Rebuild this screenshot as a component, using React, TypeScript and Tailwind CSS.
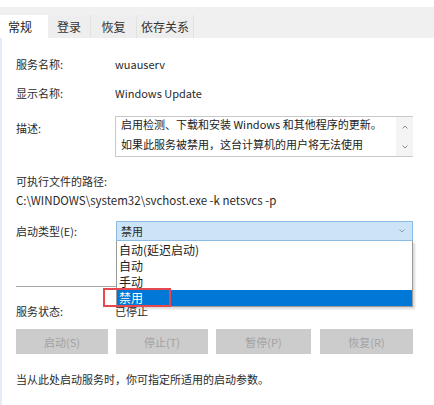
import React from 'react';

const font = { fontFamily: '"Noto Sans CJK SC", "Noto Sans", sans-serif' };

const TABS = [
  { label: '常规', w: 'w-[48px]' },
  { label: '登录', w: 'w-[43px]' },
  { label: '恢复', w: 'w-[46px]' },
  { label: '依存关系', w: 'w-[57px]' },
];
const OPTIONS = ['自动(延迟启动)', '自动', '手动', '禁用'];
const BUTTONS = [
  { label: '启动(S)', w: 'w-[92px]' },
  { label: '停止(T)', w: 'w-[92px]' },
  { label: '暂停(P)', w: 'w-[95px]' },
  { label: '恢复(R)', w: 'w-[93px]' },
];

function Row({ label, children }: { label: string; children: React.ReactNode }) {
  return (
    <div className="flex items-center h-4">
      <div className="w-[99px] shrink-0">{label}</div>
      <div>{children}</div>
    </div>
  );
}

export default function App() {
  return (
    <div className="w-[434px] h-[405px] bg-white text-[11px] leading-4 text-[#2a2a2a] overflow-hidden" style={font}>
      {/* tab strip */}
      <div className="mt-[7px] h-[31px] bg-[#f0f0f0] flex items-end text-[12px]">
        {TABS.map((t, i) => (
          <div
            key={t.label}
            className={
              i === 0
                ? `${t.w} h-[23px] bg-white flex items-center pl-[8px] text-[#222]`
                : `${t.w} h-[23px] bg-[#eeeeee] border-r border-[#e2e2e2] flex items-center justify-center text-[#333]`
            }
          >
            {t.label}
          </div>
        ))}
      </div>

      {/* body */}
      <div className="relative border-l-[2px] border-[#e6ecf5] h-[367px] pl-[14px] pr-[21px]">
        <div className="pt-[18px]">
          <Row label="服务名称:">wuauserv</Row>
        </div>
        <div className="mt-[13px]">
          <Row label="显示名称:">Windows Update</Row>
        </div>

        <div className="mt-[15px] flex">
          <div className="w-[99px] shrink-0 pt-[4px]">描述:</div>
          <div className="flex-1 h-[41px] border border-[#c8c8c8] border-r-0 flex overflow-hidden">
            <div className="flex-1 pl-[5px] leading-[20px] -mt-[3px] whitespace-nowrap text-[#222]">
              启用检测、下载和安装 Windows 和其他程序的更新。
              <br />
              如果此服务被禁用，这台计算机的用户将无法使用
            </div>
            <div className="w-[17px] bg-[#f4f4f4] flex flex-col items-center justify-between py-[2px] text-[#8a8a8a]">
              <svg width="8" height="8" viewBox="0 0 8 8" className="mt-[4px]">
                <path d="M1.5 5.5 L4 3 L6.5 5.5" stroke="currentColor" strokeWidth="1" fill="none" />
              </svg>
              <svg width="8" height="8" viewBox="0 0 8 8" className="mb-[3px]">
                <path d="M1.5 2.5 L4 5 L6.5 2.5" stroke="currentColor" strokeWidth="1" fill="none" />
              </svg>
            </div>
          </div>
        </div>

        <div className="mt-[16px]">可执行文件的路径:</div>
        <div className="mt-[3px] text-[11.5px]">C:\WINDOWS\system32\svchost.exe -k netsvcs -p</div>

        <div className="mt-[13px] flex items-center">
          <div className="w-[100px] shrink-0">启动类型(E):</div>
          <div className="relative flex-1">
            <div className="h-[20px] bg-[#cce4f7] border border-[#8cbbe4] flex items-center justify-between pl-[4px] pr-[6px]">
              <span>禁用</span>
              <svg width="8" height="6" viewBox="0 0 8 6" className="text-[#8a9bb0]">
                <path d="M1.5 1.5 L4 4 L6.5 1.5" stroke="currentColor" strokeWidth="1" fill="none" />
              </svg>
            </div>
            {/* open list */}
            <div className="absolute left-0 right-0 top-[20px] z-20 bg-white border border-[#9a9a9a] border-t-0 shadow-[2px_2px_2px_rgba(0,0,0,0.15)] pt-[1px] text-[12px]">
              {OPTIONS.map((o, i) => (
                <div
                  key={o}
                  className={
                    i === OPTIONS.length - 1
                      ? 'h-[16px] leading-[16px] pl-[2px] bg-[#0078d7] text-white'
                      : 'h-[16px] leading-[16px] pl-[2px] text-[#222]'
                  }
                >
                  {o}
                </div>
              ))}
            </div>
          </div>
        </div>

        <div className="mt-[45px] border-t border-[#a8a8a8] w-full" />

        <div className="mt-[16px]">
          <Row label="服务状态:">已停止</Row>
        </div>

        <div className="mt-[10px] flex gap-[8px]">
          {BUTTONS.map((b, i) => (
            <div
              key={b.label}
              className={`${b.w} h-[25px] bg-[#cccccc] text-[#a2a2a2] flex items-center justify-center ${i === 3 ? 'ml-[1px]' : ''}`}
            >
              {b.label}
            </div>
          ))}
        </div>

        <div className="mt-[17px]">当从此处启动服务时，你可指定所适用的启动参数。</div>

        {/* red highlight box */}
        <div className="absolute left-[101px] top-[250px] w-[68px] h-[19px] border-2 border-[#e5484d] z-30" />
      </div>
    </div>
  );
}
